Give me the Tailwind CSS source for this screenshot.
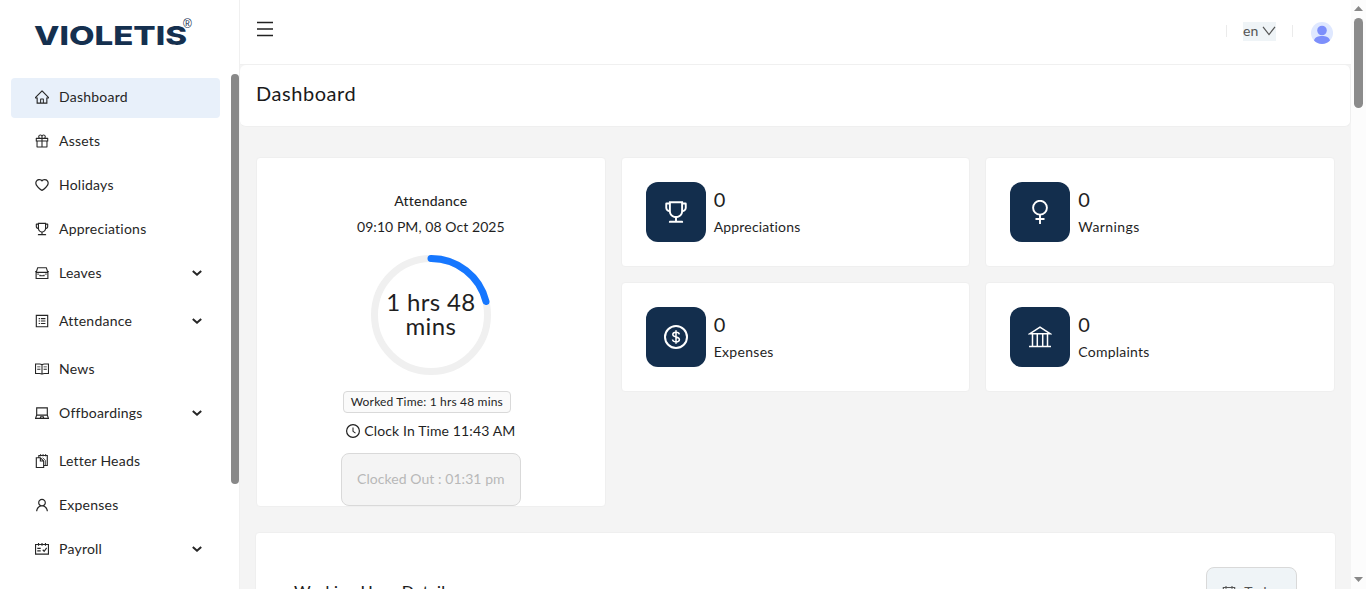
<!DOCTYPE html>
<html lang="en">
<head>
<meta charset="utf-8">
<title>Dashboard</title>
<script src="https://cdn.jsdelivr.net/npm/@tailwindcss/browser@4"></script>
</head>
<body class="h-[589px] w-[1366px] overflow-hidden bg-[#f4f4f4] font-['Lato','Noto_Sans',sans-serif] text-sm text-[#1f1f1f]">
<svg class="hidden">
  <symbol id="home" viewBox="64 64 896 896"><path d="M946.5 505L560.1 118.8l-25.9-25.9a31.5 31.5 0 00-44.4 0L77.5 505a63.9 63.9 0 00-18.8 46c.4 35.2 29.7 63.3 64.9 63.3h42.5V940h691.8V614.3h43.4c17.1 0 33.2-6.7 45.3-18.8a63.6 63.6 0 0018.7-45.3c0-17-6.7-33.1-18.8-45.2zM568 868H456V664h112v204zm217.9-325.7V868H632V640c0-22.1-17.9-40-40-40H432c-22.1 0-40 17.9-40 40v228H238.1V542.3h-96l370-369.7 23.1 23.1L882 542.3h-96.1z"/></symbol>
  <symbol id="gift" viewBox="64 64 896 896"><path d="M880 310H732.4c13.6-21.4 21.6-46.8 21.6-74 0-76.1-61.9-138-138-138-41.4 0-78.7 18.4-104 47.4-25.3-29-62.6-47.4-104-47.4-76.1 0-138 61.9-138 138 0 27.2 7.9 52.6 21.6 74H144c-17.7 0-32 14.3-32 32v200c0 4.4 3.6 8 8 8h40v344c0 17.7 14.3 32 32 32h640c17.7 0 32-14.3 32-32V550h40c4.4 0 8-3.6 8-8V342c0-17.7-14.3-32-32-32zm-334-74c0-38.6 31.4-70 70-70s70 31.4 70 70-31.4 70-70 70h-70v-70zm-138-70c38.6 0 70 31.4 70 70v70h-70c-38.6 0-70-31.4-70-70s31.4-70 70-70zM180 482V378h298v104H180zm48 68h250v308H228V550zm568 308H546V550h250v308zm48-376H546V378h298v104z"/></symbol>
  <symbol id="heart" viewBox="64 64 896 896"><path d="M923 283.6a260.04 260.04 0 00-56.9-82.8 264.4 264.4 0 00-84-55.5A265.34 265.34 0 00679.7 125c-49.3 0-97.4 13.5-139.2 39-10 6.1-19.5 12.8-28.5 20.1-9-7.3-18.5-14-28.5-20.1-41.8-25.5-89.9-39-139.2-39-35.5 0-69.9 6.8-102.4 20.3-31.4 13-59.7 31.7-84 55.5a258.44 258.44 0 00-56.9 82.8c-13.9 32.3-21 66.6-21 101.9 0 33.3 6.8 68 20.3 103.3 11.3 29.5 27.5 60.1 48.2 91 32.8 48.9 77.9 99.9 133.9 151.6 92.8 85.7 184.7 144.9 188.6 147.3l23.7 15.2c10.5 6.7 24 6.7 34.5 0l23.7-15.2c3.9-2.5 95.7-61.6 188.6-147.3 56-51.7 101.1-102.7 133.9-151.6 20.7-30.9 37-61.5 48.2-91 13.5-35.3 20.3-70 20.3-103.3.1-35.3-7-69.6-20.9-101.9zM512 814.8S156 586.7 156 385.5C156 283.6 240.3 201 344.3 201c73.1 0 136.5 40.8 167.7 100.4C543.2 241.8 606.6 201 679.7 201c104 0 188.3 82.6 188.3 184.5 0 201.2-356 429.3-356 429.3z"/></symbol>
  <symbol id="trophy" viewBox="64 64 896 896"><path d="M868 160h-92v-40c0-4.4-3.6-8-8-8H256c-4.4 0-8 3.6-8 8v40h-92a44 44 0 00-44 44v148c0 81.7 60 149.6 138.2 162C265.7 630.2 359 721.7 476 734.5v105.2H280c-17.7 0-32 14.3-32 32V904c0 4.4 3.6 8 8 8h512c4.4 0 8-3.6 8-8v-32.3c0-17.7-14.3-32-32-32H548V734.5C665 721.7 758.3 630.2 773.8 514 852 501.6 912 433.7 912 352V204a44 44 0 00-44-44zM184 352V232h64v207.6a91.99 91.99 0 01-64-87.6zm520 128c0 49.1-19.1 95.4-53.9 130.1-34.8 34.8-81 53.9-130.1 53.9h-16c-49.1 0-95.4-19.1-130.1-53.9-34.8-34.8-53.9-81-53.9-130.1V184h384v296zm136-128c0 41-26.9 75.8-64 87.6V232h64v120z"/></symbol>
  <symbol id="car" viewBox="64 64 896 896"><g fill="none" stroke="currentColor" stroke-width="72"><path d="M136 860V480L236 172h552l100 308v380zM74 415l120 60h636l120-60"/><path d="M380 630v55h264v-55"/></g><path d="M220 540h80v80h-80zM724 540h80v80h-80z"/></symbol>
  <symbol id="list" viewBox="64 64 896 896"><path fill="none" stroke="currentColor" stroke-width="72" d="M148 148h728v728H148z"/><path d="M300 320h80v72h-80zM300 476h80v72h-80zM300 632h80v72h-80zM440 320h290v72H440zM440 476h290v72H440zM440 632h290v72H440z"/></symbol>
  <symbol id="read" viewBox="64 64 896 896"><path fill="none" stroke="currentColor" stroke-width="68" d="M98 195h258q90 0 156 46q66-46 156-46h258v600H668q-90 0-156 46q-66-46-156-46H98zM512 241v590"/><path d="M205 345h205v62H205zM205 500h205v62H205zM614 345h205v62H614zM614 500h205v62H614z"/></symbol>
  <symbol id="laptop" viewBox="64 64 896 896"><path fill="none" stroke="currentColor" stroke-width="72" d="M172 650V180h680v470M172 650h680l70 205H102zM400 835l25-80h174l25 80"/></symbol>
  <symbol id="snippets" viewBox="64 64 896 896"><path fill="none" stroke="currentColor" stroke-width="72" d="M148 300h260l210 210v414H148zM408 300v210h200M310 290V160h540v640H640M420 80v130M580 80v130M740 80v130"/><path fill="none" stroke="currentColor" stroke-width="50" d="M560 300l170 170v300"/></symbol>
  <symbol id="user" viewBox="64 64 896 896"><path d="M858.5 763.6a374 374 0 00-80.6-119.5 375.63 375.63 0 00-119.5-80.6c-.4-.2-.8-.3-1.2-.5C719.5 518 760 444.7 760 362c0-137-111-248-248-248S264 225 264 362c0 82.7 40.5 156 102.8 201.1-.4.2-.8.3-1.2.5-44.8 18.9-85 46-119.5 80.6a375.63 375.63 0 00-80.6 119.5A371.7 371.7 0 00136 901.8a8 8 0 008 8.2h60c4.4 0 7.9-3.5 8-7.8 2-77.2 33-149.5 87.8-204.3 56.7-56.7 132-87.9 212.2-87.9s155.5 31.2 212.2 87.9C779 752.7 810 825 812 902.2c.1 4.4 3.6 7.8 8 7.8h60a8 8 0 008-8.2c-1-47.8-10.9-94.3-29.5-138.2zM512 534c-45.9 0-89.1-17.9-121.6-50.4S340 407.9 340 362c0-45.9 17.9-89.1 50.4-121.6S466.1 190 512 190s89.1 17.9 121.6 50.4S684 316.1 684 362c0 45.9-17.9 89.1-50.4 121.6S557.9 534 512 534z"/></symbol>
  <symbol id="schedule" viewBox="64 64 896 896"><path fill="none" stroke="currentColor" stroke-width="72" d="M100 220h824v620H100zM290 130v180M512 130v180M734 130v180M210 470h220M210 630h220M560 560l90 100 160-220"/></symbol>
  <symbol id="calendar" viewBox="64 64 896 896"><path fill="none" stroke="currentColor" stroke-width="72" d="M148 220h728v660H148zM320 120v190M704 120v190M148 440h728"/></symbol>
  <symbol id="clock" viewBox="64 64 896 896"><circle cx="512" cy="512" r="410" fill="none" stroke="currentColor" stroke-width="76"/><path fill="none" stroke="currentColor" stroke-width="66" d="M512 288v245l160 116"/></symbol>
  <symbol id="chevron" viewBox="0 0 10 6"><path fill="none" stroke="currentColor" stroke-width="2" d="M.8.9L5 4.7 9.2.9"/></symbol>
</svg>

<div class="flex h-full">
  <aside class="flex h-full w-60 shrink-0 flex-col border-r border-[#f0f0f0] bg-white">
    <div class="h-[74px] shrink-0 pl-[34px] pt-[17px]">
      <svg class="h-9 w-[162px] fill-[#15304f]">
        <text x="0" y="27.5" font-family="Inter" font-weight="800" font-size="26" textLength="153" lengthAdjust="spacingAndGlyphs">VIOLETIS</text>
        <text x="149" y="10.500" font-family="Liberation Sans" font-weight="400" font-size="12">®</text>
      </svg>
    </div>
    <div class="flex min-h-0 flex-1">
      <nav class="flex w-[231px] shrink-0 flex-col pl-[11px] pr-[11px] pt-1 tracking-[0.23px] text-[#262626]">
        <a class="mb-1 flex h-10 shrink-0 items-center gap-2.5 rounded bg-[#e8f0fa] pl-6 pb-[3px]"><svg class="size-3.5 fill-current"><use href="#home"/></svg><span>Dashboard</span></a>
        <a class="mb-1 flex h-10 shrink-0 items-center gap-2.5 pl-6 pb-[3px]"><svg class="size-3.5 fill-current"><use href="#gift"/></svg><span>Assets</span></a>
        <a class="mb-1 flex h-10 shrink-0 items-center gap-2.5 pl-6 pb-[3px]"><svg class="size-3.5 fill-current"><use href="#heart"/></svg><span>Holidays</span></a>
        <a class="mb-1 flex h-10 shrink-0 items-center gap-2.5 pl-6 pb-[3px]"><svg class="size-3.5 fill-current"><use href="#trophy"/></svg><span>Appreciations</span></a>
        <a class="mb-2 flex h-10 shrink-0 items-center gap-2.5 pl-6 pr-[18px] pb-[3px]"><svg class="size-3.5 fill-current"><use href="#car"/></svg><span class="flex-1">Leaves</span><svg class="h-1.5 w-2.5"><use href="#chevron"/></svg></a>
        <a class="mb-2 flex h-10 shrink-0 items-center gap-2.5 pl-6 pr-[18px] pb-[3px]"><svg class="size-3.5 fill-current"><use href="#list"/></svg><span class="flex-1">Attendance</span><svg class="h-1.5 w-2.5"><use href="#chevron"/></svg></a>
        <a class="mb-1 flex h-10 shrink-0 items-center gap-2.5 pl-6 pb-[3px]"><svg class="size-3.5 fill-current"><use href="#read"/></svg><span>News</span></a>
        <a class="mb-2 flex h-10 shrink-0 items-center gap-2.5 pl-6 pr-[18px] pb-[3px]"><svg class="size-3.5 fill-current"><use href="#laptop"/></svg><span class="flex-1">Offboardings</span><svg class="h-1.5 w-2.5"><use href="#chevron"/></svg></a>
        <a class="mb-1 flex h-10 shrink-0 items-center gap-2.5 pl-6 pb-[3px]"><svg class="size-3.5 fill-current"><use href="#snippets"/></svg><span>Letter Heads</span></a>
        <a class="mb-1 flex h-10 shrink-0 items-center gap-2.5 pl-6 pb-[3px]"><svg class="size-3.5 fill-current"><use href="#user"/></svg><span>Expenses</span></a>
        <a class="mb-2 flex h-10 shrink-0 items-center gap-2.5 pl-6 pr-[18px] pb-[3px]"><svg class="size-3.5 fill-current"><use href="#schedule"/></svg><span class="flex-1">Payroll</span><svg class="h-1.5 w-2.5"><use href="#chevron"/></svg></a>
      </nav>
      <div class="h-[410px] w-2 shrink-0 rounded-full bg-[#888]"></div>
    </div>
  </aside>

  <main class="flex h-full w-[1111px] shrink-0 flex-col">
    <header class="flex h-[65px] shrink-0 items-center border-b border-[#f0f0f0] bg-white pl-[17px] pr-[18px]">
      <svg class="mb-[7px] h-4 w-4" viewBox="0 0 16 16"><path fill="none" stroke="#222" stroke-width="1.4" d="M0 1.5h16M0 8h16M0 14.5h16"/></svg>
      <div class="ml-auto flex items-center">
        <span class="h-3 w-px bg-[#ebebeb] -translate-y-px"></span>
        <button class="ml-4 flex h-[19px] w-[33px] -translate-y-px items-center gap-1 bg-[#eff4f7] text-[#555]"><span class="w-[15px] tracking-[0.2px]">en</span><svg class="h-2.5 w-3.5" viewBox="0 0 14 10"><path fill="none" stroke="#555" stroke-width="1.2" d="M1 .8L7 8.500 13 .8"/></svg></button>
        <span class="ml-4 h-3 w-px bg-[#ebebeb] -translate-y-px"></span>
        <svg class="ml-[18px] mt-0.5 size-[22px]" viewBox="0 0 22 22"><circle cx="11" cy="11" r="11" fill="#dfe8ff"/><circle cx="11" cy="8.500" r="4.800" fill="#7d8ffb"/><path fill="#7d8ffb" d="M3 18.500C4 15 7 14 11 14s7 1 8 4.500A11 11 0 0 1 3 18.500z"/></svg>
      </div>
    </header>
    <div class="flex h-[62px] shrink-0 items-center rounded-md border-b border-r border-[#efefef] bg-white pl-4"><h1 class="pb-1.5 text-xl tracking-[0.55px] text-[#1a1a1a]">Dashboard</h1></div>

    <div class="grid shrink-0 grid-cols-3 gap-x-[15px] pl-4 pr-4 pt-[30px]">
      <section class="flex h-[350px] flex-col items-center rounded border border-[#efefef] bg-white pt-8 leading-[22px]">
        <div class="font-medium tracking-[0.2px]">Attendance</div>
        <div class="mt-1 tracking-[0.06px]">09:10 PM, 08 Oct 2025</div>
        <div class="mt-[17px] grid size-[120px] place-items-center">
          <svg class="col-start-1 row-start-1 size-[120px]" viewBox="0 0 120 120"><circle cx="60" cy="60" r="56.500" fill="none" stroke="#f0f0f0" stroke-width="7"/><path fill="none" stroke="#1677ff" stroke-width="7" stroke-linecap="round" d="M60 3.500A56.500 56.500 0 0 1 115 46.500"/></svg>
          <div class="col-start-1 row-start-1 pb-0.5 text-center text-2xl leading-6 tracking-[0.35px]">1 hrs 48<br>mins</div>
        </div>
        <div class="mr-2 mt-4 flex h-[22px] w-[168px] items-center justify-center rounded border border-[#d9d9d9] bg-[#fafafa] text-xs tracking-[0.18px]">Worked Time: 1 hrs 48 mins</div>
        <div class="mt-[7px] flex items-center gap-1 tracking-[0.12px]"><svg class="size-3.5"><use href="#clock"/></svg><span>Clock In Time 11:43 AM</span></div>
        <button class="mt-[11px] flex h-[53px] w-[180px] shrink-0 items-center justify-center rounded-lg border border-[#d9d9d9] bg-[#f4f4f4] pb-0.5 tracking-[0.06px] text-[#b8b8b8]">Clocked Out : 01:31 pm</button>
      </section>
      <div class="col-span-2 grid grid-cols-2 content-start gap-x-[15px] gap-y-[15px]">
        <section class="flex h-[110px] gap-2 rounded border border-[#efefef] bg-white pl-6 pt-6">
          <div class="flex size-[60px] items-center justify-center rounded-xl bg-[#132e4d] text-white"><svg class="size-6 fill-current"><use href="#trophy"/></svg></div>
          <div><div class="pt-[3px] text-xl leading-7">0</div><div class="mt-[3px] leading-[22px] tracking-[0.18px]">Appreciations</div></div>
        </section>
        <section class="flex h-[110px] gap-2 rounded border border-[#efefef] bg-white pl-6 pt-6">
          <div class="flex size-[60px] items-center justify-center rounded-xl bg-[#132e4d] text-white"><svg class="size-6" viewBox="0 0 24 24" fill="none" stroke="currentColor" stroke-width="1.900"><circle cx="12" cy="7.700" r="6.900"/><path d="M12 14.500V24M7.500 19h9"/></svg></div>
          <div><div class="pt-[3px] text-xl leading-7">0</div><div class="mt-[3px] leading-[22px] tracking-[0.4px]">Warnings</div></div>
        </section>
        <section class="flex h-[110px] gap-2 rounded border border-[#efefef] bg-white pl-6 pt-6">
          <div class="flex size-[60px] items-center justify-center rounded-xl bg-[#132e4d] text-white"><svg class="size-6" viewBox="0 0 24 24" fill="none" stroke="currentColor"><circle cx="12" cy="12" r="11" stroke-width="2"/><path stroke-width="1.500" d="M15.300 9.300C15.100 7.900 13.900 7.200 12 7.200S8.800 8 8.800 9.500c0 3.200 6.600 1.700 6.600 5 0 1.500-1.400 2.400-3.400 2.400s-3.300-.9-3.500-2.400M12 5.300v13.400"/></svg></div>
          <div><div class="pt-[3px] text-xl leading-7">0</div><div class="mt-[3px] leading-[22px] tracking-[0.3px]">Expenses</div></div>
        </section>
        <section class="flex h-[110px] gap-2 rounded border border-[#efefef] bg-white pl-6 pt-6">
          <div class="flex size-[60px] items-center justify-center rounded-xl bg-[#132e4d] text-white"><svg class="size-6" viewBox="0 0 24 24" fill="none" stroke="currentColor" stroke-width="1.500"><path d="M2 8.700L12 2.200l10 6.500zM1 21.600h22M4.500 9v12M9.300 9v12M14.700 9v12M19.500 9v12"/></svg></div>
          <div><div class="pt-[3px] text-xl leading-7">0</div><div class="mt-[3px] leading-[22px] tracking-[0.22px]">Complaints</div></div>
        </section>
      </div>
    </div>

    <section class="ml-[15px] mr-[15px] mt-[25px] flex h-[120px] shrink-0 items-start justify-between rounded border border-[#efefef] bg-white pl-[38px] pr-[38px] pt-[34px]">
      <h2 class="pt-3 text-base font-medium tracking-[0.3px]">Working Hour Details</h2>
      <button class="flex h-[50px] w-[91px] items-center justify-center gap-2 rounded-lg border border-[#d9d9d9] bg-[#eff4f7] text-[#555]"><svg class="size-3.5"><use href="#calendar"/></svg>Today</button>
    </section>
  </main>

  <div class="flex w-[15px] shrink-0 flex-col items-center bg-[#fcfcfc]">
    <svg class="mt-1.5 h-[5px] w-[9px] fill-[#888]" viewBox="0 0 9 5"><path d="M0 5L4.500 0 9 5z"/></svg>
    <div class="mt-[7px] h-[90px] w-[9px] rounded-full bg-[#8b8b8b]"></div>
    <svg class="mb-[7px] mt-auto h-[5px] w-[9px] fill-[#888]" viewBox="0 0 9 5"><path d="M0 0L4.500 5 9 0z"/></svg>
  </div>
</div>
</body>
</html>
